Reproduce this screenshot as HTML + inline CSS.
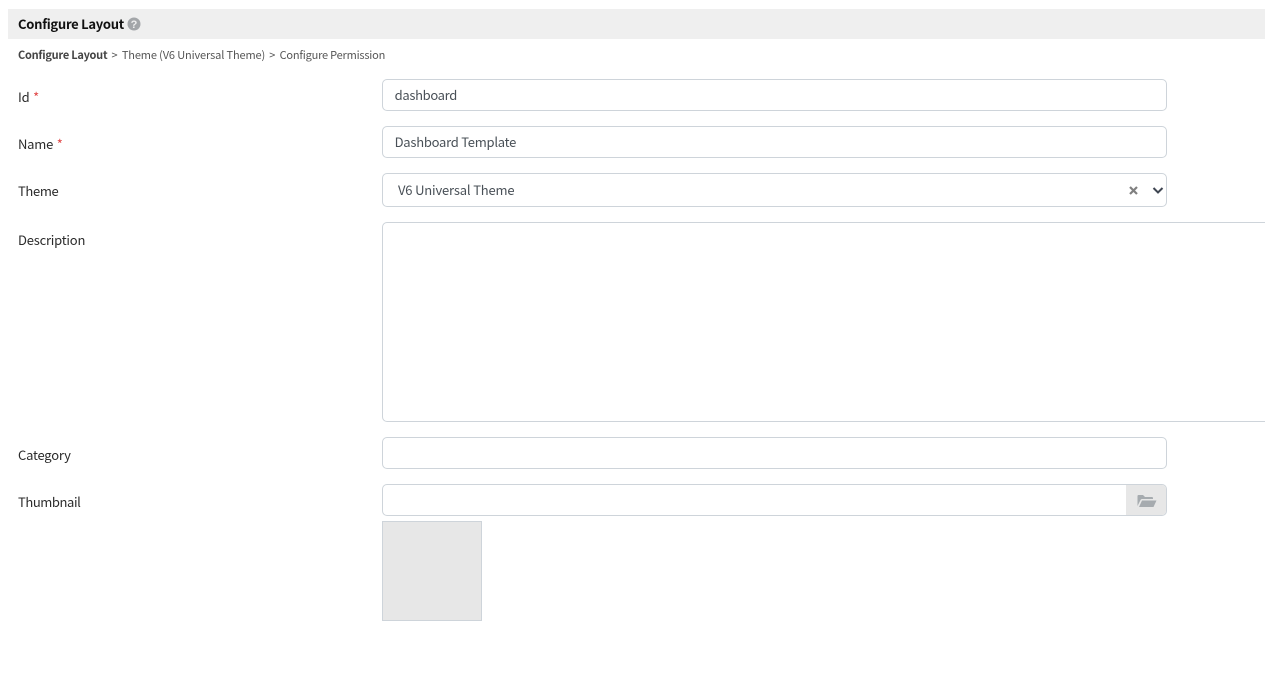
<!DOCTYPE html>
<html><head><meta charset="utf-8"><style>
html,body{margin:0;padding:0;background:#fff;width:1265px;height:674px;overflow:hidden}
body{font-family:"Noto Sans CJK SC","Liberation Sans",sans-serif;color:#333;position:relative}
.a{position:absolute;white-space:nowrap}
.head{left:8px;top:9px;width:1257px;height:30px;background:#efefef}
.lab{left:18px;font-size:13px;line-height:18px;color:#2b2b2b;letter-spacing:-.22px}
.lab i{font-style:normal;color:#e04545;letter-spacing:0;margin-left:1px}
.box{position:absolute;left:382px;box-sizing:border-box;width:785px;border:1px solid #ced4da;border-radius:5px;background:#fff;font-size:13px;color:#495057;padding-left:11.600px;white-space:nowrap;letter-spacing:-.25px}
</style></head><body>
<div class="a head"></div>
<div class="a" style="left:18px;top:15px;font-size:13px;line-height:18px;font-weight:700;color:#111;letter-spacing:-.27px">Configure Layout</div>
<svg class="a" style="left:127px;top:17px" width="14" height="14" viewBox="0 0 14 14"><circle cx="7" cy="7" r="6.500" fill="#a3a6a9"/><text x="7" y="11" font-size="11" font-weight="700" text-anchor="middle" fill="#eee" font-family="Liberation Sans">?</text></svg>
<div class="a" style="left:18px;top:47px;font-size:11px;line-height:16px;color:#555"><b style="color:#444;font-weight:700;letter-spacing:-.25px">Configure Layout</b><span style="margin:0 4.200px">&gt;</span><span style="letter-spacing:-.13px">Theme (V6 Universal Theme)</span><span style="margin:0 4.200px">&gt;</span><span style="letter-spacing:-.2px">Configure Permission</span></div>
<div class="a lab" style="top:88px">Id <i>*</i></div>
<div class="box" style="top:79px;height:32px;line-height:30px;letter-spacing:-.33px">dashboard</div>
<div class="a lab" style="top:135px">Name <i>*</i></div>
<div class="box" style="top:126px;height:32px;line-height:30px">Dashboard Template</div>
<div class="a lab" style="top:182px;letter-spacing:-.35px">Theme</div>
<div class="box" style="top:173px;height:34px;line-height:32px;padding-left:15px;letter-spacing:-.17px">V6 Universal Theme</div>
<svg class="a" style="left:1128px;top:185px" width="11" height="11" viewBox="0 0 11 11"><path d="M2 2L9 9M9 2L2 9" stroke="#808080" stroke-width="2.200"/></svg>
<svg class="a" style="left:1152px;top:186px" width="12" height="9" viewBox="0 0 12 9"><path d="M1.500 2L6 6.500L10.500 2" fill="none" stroke="#3f4652" stroke-width="2"/></svg>
<div class="a lab" style="top:231px">Description</div>
<div class="box" style="top:222px;height:200px;width:900px"></div>
<div class="a lab" style="top:446px">Category</div>
<div class="box" style="top:437px;height:32px"></div>
<div class="a lab" style="top:493px;letter-spacing:-.42px">Thumbnail</div>
<div class="box" style="top:484px;height:32px"></div>
<div class="a" style="left:1126px;top:485px;width:40px;height:30px;background:#e7e7e7;border-radius:0 4px 4px 0"></div>
<svg class="a" style="left:1137px;top:494px" width="20" height="14" viewBox="0 0 20 14"><path d="M0.500 12V2Q0.500 1 1.500 1H6L8 3H15Q16 3 16 4V5H5Q4 5 3.500 6ZM2 13L5 6.500H19.500L16.500 13Z" fill="#a6abaf"/></svg>
<div class="a" style="left:382px;top:521px;width:100px;height:100px;box-sizing:border-box;background:#e7e7e7;border:1px solid #ced4da"></div>
</body></html>
